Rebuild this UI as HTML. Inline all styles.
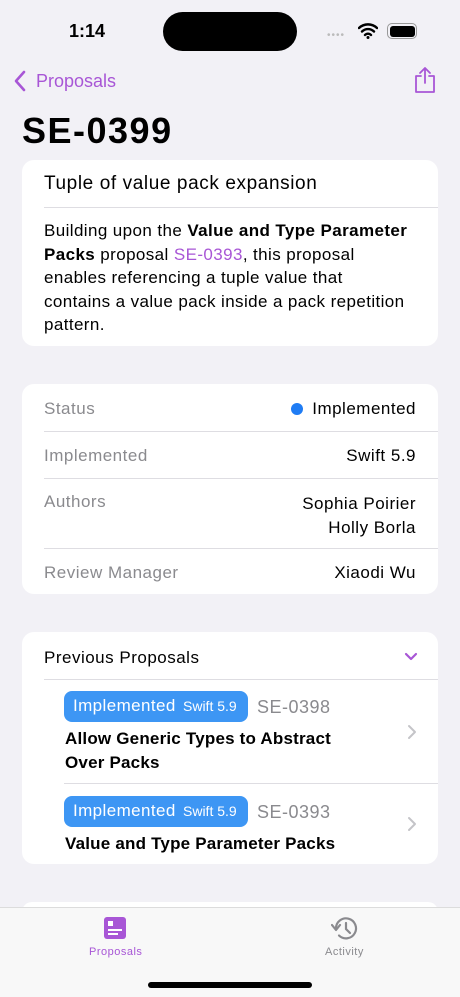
<!DOCTYPE html><html><head><meta charset="utf-8"><style>
*{margin:0;padding:0;box-sizing:border-box}
html,body{width:460px;height:997px;overflow:hidden}
body{background:#f2f1f6;font-family:"Liberation Sans",sans-serif;position:relative;color:#000}
.a{position:absolute}
.card{position:absolute;left:22px;width:416px;background:#fff;border-radius:12px}
.sep{position:absolute;height:1px;background:#dedde2;right:0}
.t{position:absolute;font-size:17px;white-space:nowrap;line-height:20px;letter-spacing:0.5px}
.g{color:#8a8a8e}
.r{right:22px;text-align:right}
.pill{position:absolute;left:42px;width:184px;height:31px;background:#3d96f4;border-radius:8px;color:#fff}
</style></head><body>
<div class="t" style="left:69px;top:21px;font-size:18px;font-weight:bold;letter-spacing:0">1:14</div>
<div class="a" style="left:163px;top:12px;width:134px;height:39px;background:#000;border-radius:20px"></div>
<div class="a" style="left:327px;top:30px;color:#bbb;font-size:10px;letter-spacing:1px">••••</div>
<svg class="a" style="left:358px;top:23px" width="20" height="16" viewBox="0 0 20 16"><path d="M1 5a13 13 0 0 1 18 0M4 8.5a8.5 8.5 0 0 1 12 0M7 12a4 4 0 0 1 6 0" stroke="#000" stroke-width="2.4" fill="none" stroke-linecap="round"/><circle cx="10" cy="14.5" r="1.5"/></svg>
<div class="a" style="left:387px;top:23px;width:30px;height:16px;border:1.5px solid #999;border-radius:5px;padding:1.5px"><div style="background:#000;width:100%;height:100%;border-radius:3px"></div></div>
<svg class="a" style="left:13px;top:70px" width="14" height="22" viewBox="0 0 14 22"><path d="M11 2L3 11l8 9" stroke="#a856d6" stroke-width="2.6" fill="none" stroke-linecap="round" stroke-linejoin="round"/></svg>
<div class="t" style="left:36px;top:71px;font-size:18px;color:#a856d6;letter-spacing:0">Proposals</div>
<svg class="a" style="left:413px;top:66px" width="24" height="28" viewBox="0 0 24 28"><path d="M8 10H3v16h18V10h-5M12 17V2M7 7l5-5 5 5" stroke="#a856d6" stroke-width="1.8" fill="none" stroke-linecap="round" stroke-linejoin="round"/></svg>
<div class="t" style="left:22px;top:112px;font-size:36px;font-weight:bold;line-height:38px;letter-spacing:1.5px">SE-0399</div>

<div class="card" style="top:160px;height:186px">
<div class="t" style="left:22px;top:14px;font-size:19px;letter-spacing:0.6px">Tuple of value pack expansion</div>
<div class="sep" style="left:22px;top:47px"></div>
<div class="a" style="left:22px;top:59px;width:380px;font-size:17px;line-height:23.5px;letter-spacing:0.4px">Building upon the <b>Value and Type Parameter Packs</b> proposal <span style="color:#a856d6">SE-0393</span>, this proposal<br>enables referencing a tuple value that<br>contains a value pack inside a pack repetition pattern.</div>
</div>

<div class="card" style="top:384px;height:210px">
<div class="t g" style="left:22px;top:15px">Status</div>
<div class="t r" style="top:15px"><span style="display:inline-block;width:12px;height:12px;border-radius:6px;background:#1f7cf4;margin-right:9px;vertical-align:-1px"></span>Implemented</div>
<div class="sep" style="left:22px;top:47px"></div>
<div class="t g" style="left:22px;top:62px">Implemented</div>
<div class="t r" style="top:62px">Swift 5.9</div>
<div class="sep" style="left:22px;top:94px"></div>
<div class="t g" style="left:22px;top:108px">Authors</div>
<div class="t r" style="top:108px;line-height:24px">Sophia Poirier<br>Holly Borla</div>
<div class="sep" style="left:22px;top:164px"></div>
<div class="t g" style="left:22px;top:179px">Review Manager</div>
<div class="t r" style="top:179px">Xiaodi Wu</div>
</div>

<div class="card" style="top:632px;height:232px">
<div class="t" style="left:22px;top:16px">Previous Proposals</div>
<svg class="a" style="left:382px;top:20px" width="14" height="10" viewBox="0 0 14 10"><path d="M2 2l5 5 5-5" stroke="#a856d6" stroke-width="2.2" fill="none" stroke-linecap="round" stroke-linejoin="round"/></svg>
<div class="sep" style="left:22px;top:47px"></div>
<div class="pill" style="top:59px"><span class="a" style="left:9px;top:5px;font-size:17px;letter-spacing:0.4px">Implemented</span><span class="a" style="left:119px;top:7px;font-size:14px">Swift 5.9</span></div>
<div class="t g" style="left:235px;top:65px;font-size:18px">SE-0398</div>
<div class="a" style="left:43px;top:95px;font-size:17px;line-height:23.5px;font-weight:bold;letter-spacing:0.2px">Allow Generic Types to Abstract<br>Over Packs</div>
<svg class="a" style="left:385px;top:92px" width="10" height="16" viewBox="0 0 10 16"><path d="M2 2l6 6-6 6" stroke="#c4c4c8" stroke-width="2" fill="none" stroke-linecap="round" stroke-linejoin="round"/></svg>
<div class="sep" style="left:42px;top:151px"></div>
<div class="pill" style="top:164px"><span class="a" style="left:9px;top:5px;font-size:17px;letter-spacing:0.4px">Implemented</span><span class="a" style="left:119px;top:7px;font-size:14px">Swift 5.9</span></div>
<div class="t g" style="left:235px;top:170px;font-size:18px">SE-0393</div>
<div class="a" style="left:43px;top:200px;font-size:17px;line-height:23.5px;font-weight:bold;letter-spacing:0.2px">Value and Type Parameter Packs</div>
<svg class="a" style="left:385px;top:184px" width="10" height="16" viewBox="0 0 10 16"><path d="M2 2l6 6-6 6" stroke="#c4c4c8" stroke-width="2" fill="none" stroke-linecap="round" stroke-linejoin="round"/></svg>
</div>
<div class="card" style="top:902px;height:20px"></div>

<div class="a" style="left:0;top:907px;width:460px;height:90px;background:#f8f8f8;border-top:1px solid #dcdcdc"></div>
<div class="a" style="left:104px;top:917px;width:22px;height:22px;background:#a856d6;border-radius:3px"><div class="a" style="left:4px;top:4px;width:5px;height:5px;background:#fff"></div><div class="a" style="left:4px;top:12px;width:14px;height:1.5px;background:#fff"></div><div class="a" style="left:4px;top:16px;width:10px;height:1.5px;background:#fff"></div></div>
<div class="t" style="left:89px;top:945px;font-size:11px;color:#a856d6;line-height:14px">Proposals</div>
<svg class="a" style="left:331px;top:915px" width="28" height="27" viewBox="0 0 28 27"><path d="M5 13.5A10 10 0 1 1 8 20.5" stroke="#8a8a8e" stroke-width="2.2" fill="none" stroke-linecap="round"/><path d="M1 10l4 5 4-5" stroke="#8a8a8e" stroke-width="2.2" fill="none" stroke-linecap="round" stroke-linejoin="round"/><path d="M15 8v6l4 4" stroke="#8a8a8e" stroke-width="2.2" fill="none" stroke-linecap="round"/></svg>
<div class="t" style="left:325px;top:945px;font-size:11px;color:#8a8a8e;line-height:14px">Activity</div>
<div class="a" style="left:148px;top:982px;width:164px;height:6px;background:#000;border-radius:3px"></div>
</body></html>
